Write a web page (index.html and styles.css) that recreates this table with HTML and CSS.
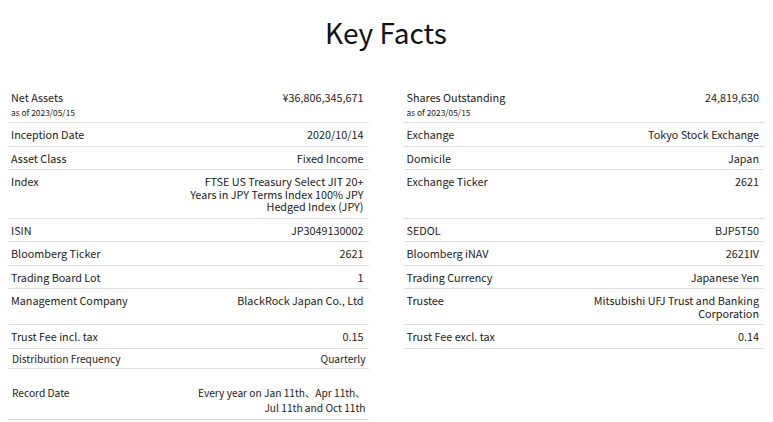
FILE: index.html
```html
<!DOCTYPE html>
<html lang="en">
<head>
<meta charset="utf-8">
<title>Key Facts</title>
<link rel="stylesheet" href="styles.css">
</head>
<body>
<h1 class="title">Key Facts</h1>
<div class="facts">
  <div class="fact fact-tall">
    <div class="label">Net Assets<span class="asof">as of 2023/05/15</span></div>
    <div class="value">¥36,806,345,671</div>
  </div>
  <div class="fact fact-tall">
    <div class="label">Shares Outstanding<span class="asof">as of 2023/05/15</span></div>
    <div class="value">24,819,630</div>
  </div>

  <div class="fact"><div class="label">Inception Date</div><div class="value">2020/10/14</div></div>
  <div class="fact"><div class="label">Exchange</div><div class="value">Tokyo Stock Exchange</div></div>

  <div class="fact"><div class="label">Asset Class</div><div class="value">Fixed Income</div></div>
  <div class="fact"><div class="label">Domicile</div><div class="value">Japan</div></div>

  <div class="fact"><div class="label">Index</div><div class="value">FTSE US Treasury Select JIT 20+<br>Years in JPY Terms Index 100% JPY<br>Hedged Index (JPY)</div></div>
  <div class="fact"><div class="label">Exchange Ticker</div><div class="value">2621</div></div>

  <div class="fact"><div class="label">ISIN</div><div class="value">JP3049130002</div></div>
  <div class="fact"><div class="label">SEDOL</div><div class="value">BJP5T50</div></div>

  <div class="fact"><div class="label">Bloomberg Ticker</div><div class="value">2621</div></div>
  <div class="fact"><div class="label">Bloomberg iNAV</div><div class="value">2621IV</div></div>

  <div class="fact"><div class="label">Trading Board Lot</div><div class="value">1</div></div>
  <div class="fact"><div class="label">Trading Currency</div><div class="value">Japanese Yen</div></div>

  <div class="fact"><div class="label">Management Company</div><div class="value">BlackRock Japan Co., Ltd</div></div>
  <div class="fact"><div class="label">Trustee</div><div class="value">Mitsubishi UFJ Trust and Banking<br>Corporation</div></div>

  <div class="fact"><div class="label">Trust Fee incl. tax</div><div class="value">0.15</div></div>
  <div class="fact"><div class="label">Trust Fee excl. tax</div><div class="value">0.14</div></div>

  <div class="fact fact-alt fact-dist"><div class="label">Distribution Frequency</div><div class="value">Quarterly</div></div>
  <div class="empty"></div>

  <div class="fact fact-alt fact-record"><div class="label">Record Date</div><div class="value">Every year on Jan 11th、Apr 11th、<br>Jul 11th and Oct 11th</div></div>
  <div class="empty"></div>
</div>
</body>
</html>
```

FILE: styles.css
```css
html, body {
  margin: 0;
  padding: 0;
  background: #ffffff;
}

body {
  padding: 0 9px 0 8px;
  font-family: "Noto Sans CJK JP", "Noto Sans", sans-serif;
  color: #222222;
}

.title {
  margin: 0;
  padding-top: 12px;
  height: 86px;
  box-sizing: border-box;
  text-align: center;
  font-size: 28px;
  font-weight: 400;
  line-height: 40px;
  color: #111111;
}

.facts {
  display: grid;
  grid-template-columns: 1fr 1fr;
  column-gap: 35px;
  align-items: stretch;
}

.fact {
  display: flex;
  justify-content: space-between;
  align-items: flex-start;
  padding: 5px 5px 5px 3px;
  font-size: 10.8px;
  line-height: 12.5px;
  border-bottom: 1px solid #e0e0e0;
}

.fact-tall {
  padding-bottom: 4.5px;
}

.label {
  display: flex;
  flex-direction: column;
  white-space: nowrap;
}

.asof {
  margin-top: 2px;
  font-size: 8.4px;
  line-height: 12px;
}

.value {
  text-align: right;
}

.fact-alt {
  padding-left: 4px;
  padding-right: 3px;
  font-size: 10.2px;
}

.fact-dist {
  padding-top: 4px;
  padding-bottom: 2.5px;
}

.fact-record {
  padding-top: 16px;
  padding-bottom: 4px;
  line-height: 15px;
}

.empty {
  min-height: 1px;
}
```
